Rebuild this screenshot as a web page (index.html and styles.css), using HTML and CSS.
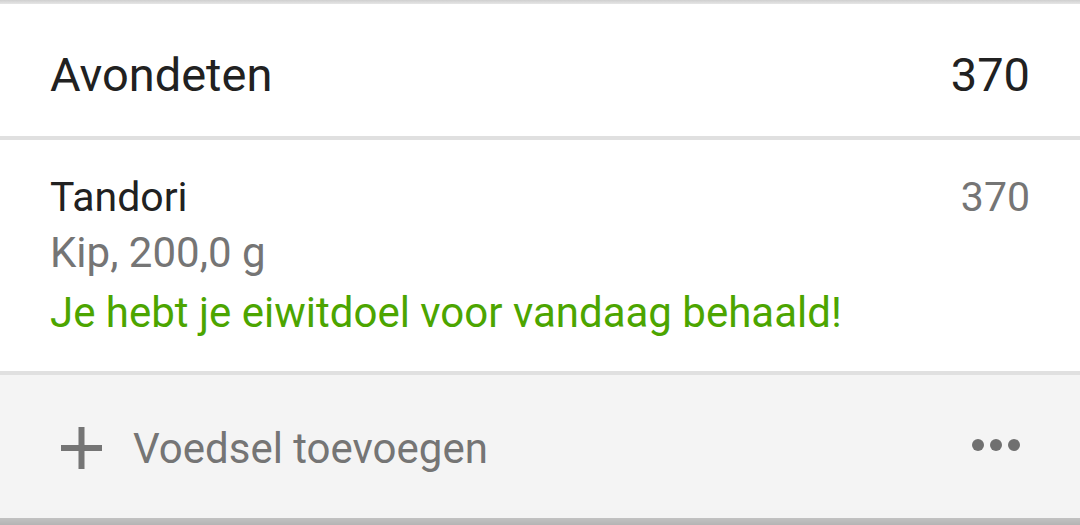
FILE: index.html
```html
<!DOCTYPE html>
<html>
<head>
  <title>Avondeten</title>
  <link rel="stylesheet" href="styles.css">
</head>
<body>
  <div class="meal-card">
    <div class="meal-header">
      <span class="meal-title">Avondeten</span>
      <span class="meal-total">370</span>
    </div>

    <div class="food-item">
      <div class="food-info">
        <div class="food-name">Tandori</div>
        <div class="food-detail">Kip, 200,0 g</div>
        <div class="food-note">Je hebt je eiwitdoel voor vandaag behaald!</div>
      </div>
      <div class="food-calories">370</div>
    </div>

    <div class="meal-footer">
      <div class="add-food">
        <svg class="plus-icon" width="41" height="42" viewBox="0 0 41 42">
          <rect x="0" y="18" width="41" height="6" fill="#757575"/>
          <rect x="17.5" y="0" width="6" height="42" fill="#757575"/>
        </svg>
        <span>Voedsel toevoegen</span>
      </div>
      <div class="more-dots">
        <span></span><span></span><span></span>
      </div>
    </div>
  </div>
</body>
</html>
```

FILE: styles.css
```css
body {
  margin: 0;
  font-family: Roboto, "Noto Sans", sans-serif;
  background-color: #fff;
}

.meal-card {
  width: 1080px;
  height: 525px;
  background: linear-gradient(#cfcfcf, #e6e6e6) top / 100% 4px no-repeat,
              linear-gradient(#c2c2c2, #b4b4b4) bottom / 100% 7px no-repeat,
              #fff;
  padding-top: 4px;
  box-sizing: border-box;
}

.meal-header {
  display: flex;
  justify-content: space-between;
  height: 136px;
  padding: 43px 50px 0;
  box-sizing: border-box;
  font-size: 47px;
  line-height: 56px;
  color: #212121;
  border-bottom: 4px solid #e0e0e0;
}

.food-item {
  display: flex;
  justify-content: space-between;
  padding: 29px 50px 30px;
  font-size: 42px;
  line-height: 56px;
  border-bottom: 4px solid #e0e0e0;
}

.food-name {
  font-size: 41px;
  color: #212121;
}

.food-detail {
  color: #757575;
}

.food-note {
  margin-top: 4px;
  color: #4ca500;
}

.food-calories {
  font-size: 41px;
  color: #757575;
}

.meal-footer {
  display: flex;
  justify-content: space-between;
  align-items: center;
  height: 143px;
  padding: 0 60px 0 61px;
  box-sizing: border-box;
  background-color: #f4f4f4;
}

.add-food {
  display: flex;
  align-items: center;
  font-size: 42px;
  line-height: 56px;
  color: #757575;
  padding-top: 4px;
}

.plus-icon {
  margin-right: 31px;
  margin-top: -2px;
}

.more-dots {
  display: flex;
  gap: 6px;
  padding-bottom: 3px;
}

.more-dots span {
  width: 12px;
  height: 12px;
  border-radius: 50%;
  background-color: #707070;
}
```
